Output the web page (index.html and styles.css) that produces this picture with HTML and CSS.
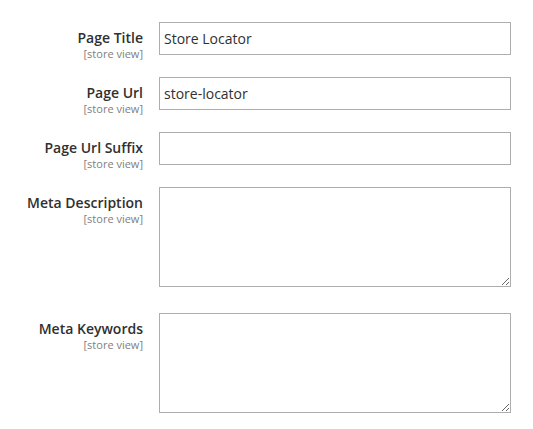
FILE: index.html
```html
<!DOCTYPE html>
<html>
<head>
<meta charset="utf-8">
<link rel="stylesheet" href="styles.css">
</head>
<body>
<form class="form">
  <div class="field">
    <div class="label"><span class="name">Page Title</span><span class="scope">[store view]</span></div>
    <input class="input" type="text" value="Store Locator">
  </div>
  <div class="field">
    <div class="label"><span class="name">Page Url</span><span class="scope">[store view]</span></div>
    <input class="input" type="text" value="store-locator">
  </div>
  <div class="field">
    <div class="label"><span class="name">Page Url Suffix</span><span class="scope">[store view]</span></div>
    <input class="input" type="text" value="">
  </div>
  <div class="field field-area">
    <div class="label"><span class="name">Meta Description</span><span class="scope">[store view]</span></div>
    <textarea class="area"></textarea>
  </div>
  <div class="field field-area">
    <div class="label"><span class="name">Meta Keywords</span><span class="scope">[store view]</span></div>
    <textarea class="area"></textarea>
  </div>
</form>
</body>
</html>
```

FILE: styles.css
```css
html, body {
  margin: 0;
  padding: 0;
  background: #ffffff;
}
body {
  font-family: "Open Sans", "Liberation Sans", sans-serif;
  color: #303030;
}
.form {
  display: flex;
  flex-direction: column;
  gap: 22px;
  padding-top: 22px;
}
.field {
  display: grid;
  grid-template-columns: 143px 352px;
  column-gap: 16px;
  align-items: start;
}
.field-area + .field-area {
  margin-top: 4px;
}
.label {
  display: flex;
  flex-direction: column;
  align-items: flex-end;
  text-align: right;
  box-sizing: border-box;
  height: 33px;
  padding-top: 6px;
  overflow: visible;
}
.name {
  font-size: 14px;
  font-weight: 600;
  line-height: 20px;
  color: #303030;
}
.scope {
  font-size: 11px;
  line-height: 12px;
  color: #808080;
}
.input, .area {
  box-sizing: border-box;
  width: 352px;
  margin: 0;
  border: 1px solid #adadad;
  border-radius: 0;
  background: #fff;
  font-family: "Open Sans", "Liberation Sans", sans-serif;
  font-size: 14px;
  color: #303030;
  outline: none;
}
.input {
  height: 33px;
  padding: 0 4px;
}
.area {
  height: 100px;
  padding: 4px;
  resize: both;
  display: block;
}
```
